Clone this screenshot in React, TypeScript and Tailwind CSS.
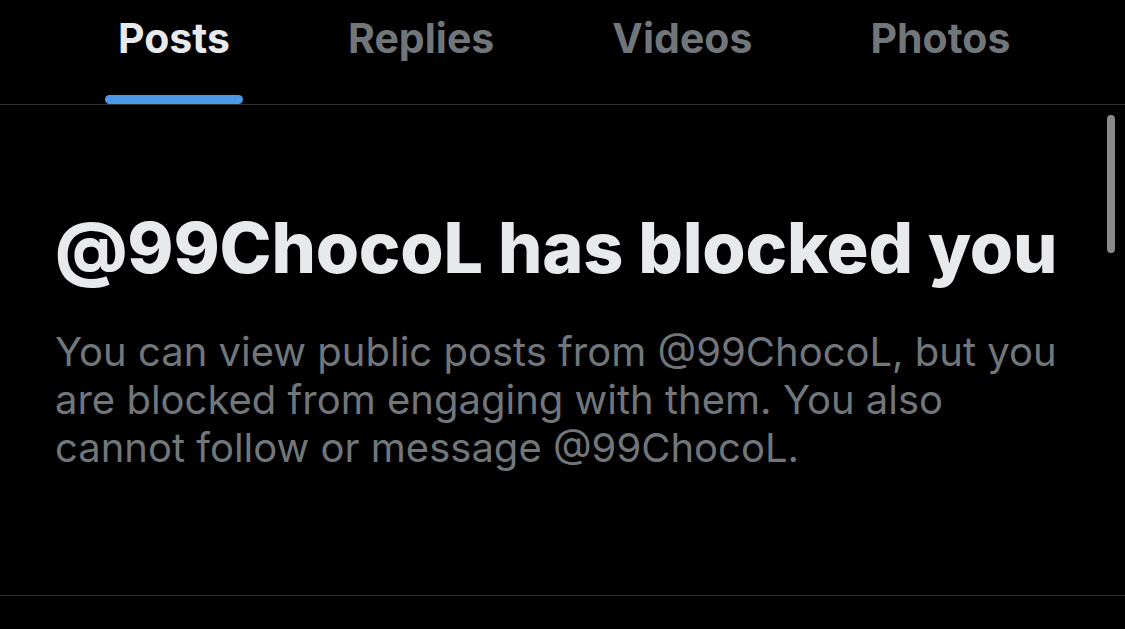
export default function App() {
  return (
    <div className="relative w-[1125px] h-[629px] overflow-hidden bg-black" style={{ fontFamily: "Inter, 'Liberation Sans', sans-serif" }}>
      <div className="flex h-[105px] pl-[105px] gap-[92px] border-b border-[#2f3336]">
        {[
          { t: "Posts", a: true },
          { t: "Replies", a: false },
          { t: "Videos", a: false },
          { t: "Photos", a: false },
        ].map((x) => (
          <div key={x.t} className="relative flex flex-col items-center px-[13px]">
            <div className={`pt-[14px] text-[41px] font-bold leading-[48px] ${x.a ? "text-[#e7e9ea]" : "text-[#71767b]"}`}>{x.t}</div>
            {x.a && <div className="absolute bottom-0 left-0 right-0 h-[9px] rounded-full bg-[#4b98e6]" />}
          </div>
        ))}
      </div>
      <div className="h-[491px] border-b border-[#2f3336] pl-[55px] pt-[101px]">
        <h1 className="text-[70px] font-extrabold leading-[84px] text-[#e7e9ea] tracking-[-0.2px]">@99ChocoL has blocked you</h1>
        <p className="mt-[38px] text-[40px] leading-[48px] text-[#71767b]">
          You can view public posts from @99ChocoL, but you
          <br />
          are blocked from engaging with them. You also
          <br />
          cannot follow or message @99ChocoL.
        </p>
      </div>
      <div className="absolute left-[1107px] top-[115px] w-[8px] h-[138px] rounded-full bg-[#8a8a8a]" />
    </div>
  );
}
